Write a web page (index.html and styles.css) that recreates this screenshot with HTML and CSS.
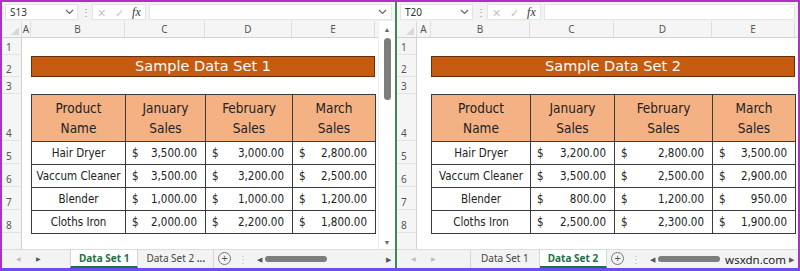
FILE: index.html
```html
<!DOCTYPE html>
<html>
<head>
	<meta charset="UTF-8">
	<title>Sample Data Sets</title>
<link rel="stylesheet" href="styles.css">
</head>
<body>
<div class="frame">
	<div class="pane pane-left">
		<div class="fbar">
			<div class="namebox">S13<svg class="chev" width="9" height="6" viewBox="0 0 9 6"><polyline points="1,1 4.5,4.5 8,1" fill="none" stroke="#666" stroke-width="1.2"/></svg></div>
			<span class="dots">&#8942;</span>
			<div class="fxbox"><span class="x">&#10005;</span><span class="ok">&#10003;</span><i>fx</i></div>
			<div class="finput"><svg class="chev" width="9" height="6" viewBox="0 0 9 6"><polyline points="1,1 4.5,4.5 8,1" fill="none" stroke="#666" stroke-width="1.2"/></svg></div>
		</div>
		<div class="sheet">
			<div class="grid">
				<div class="colhead">
					<div class="corner"></div>
					<div class="ch ca">A</div>
					<div class="ch cb">B</div>
					<div class="ch cc">C</div>
					<div class="ch cd">D</div>
					<div class="ch ce">E</div>
					<div class="ch rest"></div>
				</div>
				<div class="body">
					<div class="rowhead">
						<div class="rh r1">1</div>
						<div class="rh r2">2</div>
						<div class="rh r3">3</div>
						<div class="rh r4">4</div>
						<div class="rh r5">5</div>
						<div class="rh r5">6</div>
						<div class="rh r5">7</div>
						<div class="rh r5">8</div>
						<div class="rh rest"></div>
					</div>
					<div class="cells">
						<div class="title">Sample Data Set 1</div>
						<table class="data">
							<colgroup><col class="cb"><col class="cc"><col class="cd"><col class="ce"></colgroup>
							<tr><th>Product<br>Name</th><th>January<br>Sales</th><th>February<br>Sales</th><th>March<br>Sales</th></tr>
							<tr><td>Hair Dryer</td><td class="num"><span class="acc"><b>$</b><b>3,500.00</b></span></td><td class="num"><span class="acc"><b>$</b><b>3,000.00</b></span></td><td class="num"><span class="acc"><b>$</b><b>2,800.00</b></span></td></tr>
							<tr><td>Vaccum Cleaner</td><td class="num"><span class="acc"><b>$</b><b>3,500.00</b></span></td><td class="num"><span class="acc"><b>$</b><b>3,200.00</b></span></td><td class="num"><span class="acc"><b>$</b><b>2,500.00</b></span></td></tr>
							<tr><td>Blender</td><td class="num"><span class="acc"><b>$</b><b>1,000.00</b></span></td><td class="num"><span class="acc"><b>$</b><b>1,000.00</b></span></td><td class="num"><span class="acc"><b>$</b><b>1,200.00</b></span></td></tr>
							<tr><td>Cloths Iron</td><td class="num"><span class="acc"><b>$</b><b>2,000.00</b></span></td><td class="num"><span class="acc"><b>$</b><b>2,200.00</b></span></td><td class="num"><span class="acc"><b>$</b><b>1,800.00</b></span></td></tr>
						</table>
					</div>
				</div>
			</div>
			<div class="vscroll">
				<span class="arr">&#9650;</span>
				<div class="vthumb"></div>
				<span class="arr">&#9660;</span>
			</div>
		</div>
		<div class="tabs">
			<span class="nav dim">&#9664;</span>
			<span class="nav">&#9654;</span>
			<div class="tab first active">Data Set 1</div>
			<div class="tab">Data Set 2 <b>...</b></div>
			<span class="plus">+</span>
			<span class="vdots">&#8942;</span>
			<div class="hscroll">
				<span class="harr">&#9664;</span>
				<div class="hthumb"></div>
				<span class="fill"></span>
				<span class="harr">&#9654;</span>
			</div>
		</div>
	</div>
	<div class="divider"></div>
	<div class="pane pane-right">
		<div class="fbar">
			<div class="namebox">T20<svg class="chev" width="9" height="6" viewBox="0 0 9 6"><polyline points="1,1 4.5,4.5 8,1" fill="none" stroke="#666" stroke-width="1.2"/></svg></div>
			<span class="dots">&#8942;</span>
			<div class="fxbox"><span class="x">&#10005;</span><span class="ok">&#10003;</span><i>fx</i></div>
			<div class="finput"></div>
		</div>
		<div class="sheet">
			<div class="grid">
				<div class="colhead">
					<div class="corner"></div>
					<div class="ch ca2">A</div>
					<div class="ch cb2">B</div>
					<div class="ch cc2">C</div>
					<div class="ch cd2">D</div>
					<div class="ch ce2">E</div>
					<div class="ch rest"></div>
				</div>
				<div class="body">
					<div class="rowhead">
						<div class="rh r1">1</div>
						<div class="rh r2">2</div>
						<div class="rh r3">3</div>
						<div class="rh r4">4</div>
						<div class="rh r5">5</div>
						<div class="rh r5">6</div>
						<div class="rh r5">7</div>
						<div class="rh r5">8</div>
						<div class="rh rest"></div>
					</div>
					<div class="cells cells2">
						<div class="title">Sample Data Set 2</div>
						<table class="data">
							<colgroup><col class="cb2"><col class="cc2"><col class="cd2"><col class="ce2"></colgroup>
							<tr><th>Product<br>Name</th><th>January<br>Sales</th><th>February<br>Sales</th><th>March<br>Sales</th></tr>
							<tr><td>Hair Dryer</td><td class="num"><span class="acc"><b>$</b><b>3,200.00</b></span></td><td class="num"><span class="acc"><b>$</b><b>2,800.00</b></span></td><td class="num"><span class="acc"><b>$</b><b>3,500.00</b></span></td></tr>
							<tr><td>Vaccum Cleaner</td><td class="num"><span class="acc"><b>$</b><b>3,500.00</b></span></td><td class="num"><span class="acc"><b>$</b><b>2,500.00</b></span></td><td class="num"><span class="acc"><b>$</b><b>2,900.00</b></span></td></tr>
							<tr><td>Blender</td><td class="num"><span class="acc"><b>$</b><b>800.00</b></span></td><td class="num"><span class="acc"><b>$</b><b>1,200.00</b></span></td><td class="num"><span class="acc"><b>$</b><b>950.00</b></span></td></tr>
							<tr><td>Cloths Iron</td><td class="num"><span class="acc"><b>$</b><b>2,500.00</b></span></td><td class="num"><span class="acc"><b>$</b><b>2,300.00</b></span></td><td class="num"><span class="acc"><b>$</b><b>1,900.00</b></span></td></tr>
						</table>
					</div>
				</div>
			</div>
		</div>
		<div class="tabs">
			<span class="nav dim">&#9664;</span>
			<span class="nav dim">&#9654;</span>
			<div class="tab first">Data Set 1</div>
			<div class="tab active">Data Set 2</div>
			<span class="plus">+</span>
			<span class="vdots">&#8942;</span>
			<div class="hscroll">
				<span class="harr">&#9664;</span>
				<div class="hthumb"></div>
				<span class="mark">wsxdn.com</span>
				<span class="harr">&#9654;</span>
			</div>
		</div>
	</div>
</div>
</body>
</html>
```

FILE: styles.css
```css
*{
	box-sizing: border-box;
}
body{
	margin: 0;
	font-family: "Noto Sans", "Open Sans", sans-serif;
	background: #fff;
}
.frame{
	width: 800px;
	height: 271px;
	display: flex;
	border: 2px solid #b12fc4;
	border-bottom: 3px solid #6d4cf0;
	overflow: hidden;
}
.pane{
	display: flex;
	flex-direction: column;
	height: 100%;
	overflow: hidden;
}
.pane-left{
	width: 393px;
}
.pane-right{
	flex: 1;
}
.divider{
	width: 2px;
	background: #3f8a4e;
}

/* formula bar */
.fbar{
	height: 19px;
	background: #f3f3f3;
	display: flex;
	align-items: center;
	padding: 2px 3px 1px 3px;
	gap: 3px;
	font-size: 10px;
	color: #333;
}
.namebox{
	width: 73px;
	height: 16px;
	background: #fff;
	border: 1px solid #e4e4e4;
	display: flex;
	justify-content: space-between;
	align-items: center;
	padding: 0 3px 0 4px;
}
.dots{
	color: #999;
	width: 8px;
	text-align: center;
}
.fxbox{
	width: 54px;
	height: 16px;
	background: #fff;
	border: 1px solid #e4e4e4;
	display: flex;
	align-items: center;
	justify-content: space-around;
	color: #c4c4c4;
	font-size: 11px;
}
.fxbox i{
	font-family: "Liberation Serif", serif;
	color: #333;
	font-size: 12px;
}
.finput{
	flex: 1;
	height: 16px;
	background: #fff;
	border: 1px solid #e4e4e4;
	display: flex;
	justify-content: flex-end;
	align-items: center;
	padding-right: 4px;
}

/* sheet */
.sheet{
	flex: 1;
	display: flex;
	overflow: hidden;
}
.grid{
	flex: 1;
	display: flex;
	flex-direction: column;
	overflow: hidden;
}
.colhead{
	height: 17px;
	flex: none;
	display: flex;
	background: #f5f5f5;
	border-bottom: 1px solid #d2d2d2;
	font-size: 10px;
	color: #555;
}
.corner{
	width: 20px;
	flex: none;
	border-right: 1px solid #dcdcdc;
	position: relative;
}
.corner:after{
	content: "";
	position: absolute;
	right: 2px;
	bottom: 2px;
	border-left: 8px solid transparent;
	border-bottom: 8px solid #d8d8d8;
}
.ch{
	flex: none;
	text-align: center;
	line-height: 16px;
	border-right: 1px solid #dedede;
}
.ch.rest{
	flex: 1;
	border-right: none;
}
.ca{ width: 9px; }
.cb{ width: 94px; }
.cc{ width: 80px; }
.cd{ width: 87px; }
.ce{ width: 83px; }
.ca2{ width: 14px; }
.cb2{ width: 99px; }
.cc2{ width: 84px; }
.cd2{ width: 98px; }
.ce2{ width: 83px; }

.body{
	flex: 1;
	display: flex;
	overflow: hidden;
}
.rowhead{
	width: 20px;
	flex: none;
	background: #f5f5f5;
	border-right: 1px solid #d2d2d2;
	display: flex;
	flex-direction: column;
	font-size: 10px;
	color: #555;
}
.rh{
	flex: none;
	border-bottom: 1px solid #e2e2e2;
	display: flex;
	align-items: flex-end;
	padding: 0 0 1px 4px;
	line-height: 12px;
}
.rh.rest{
	flex: 1;
	border-bottom: none;
}
.r1{ height: 17px; }
.r2{ height: 22px; }
.r3{ height: 17px; }
.r4{ height: 47px; }
.r5{ height: 23px; }

.cells{
	flex: 1;
	padding: 18px 0 0 9px;
	background: #fff;
}
.cells2{
	padding-left: 14px;
}
.title{
	width: 344px;
	height: 21px;
	background: #c55a11;
	border: 1px solid #6b2e07;
	color: #fff;
	font-family: "DejaVu Sans", sans-serif;
	font-size: 14.5px;
	line-height: 19px;
	text-align: center;
}
.cells2 .title{
	width: 364px;
}
.data{
	margin-top: 17px;
	width: 344px;
	table-layout: fixed;
	border-collapse: collapse;
	font-family: "DejaVu Sans Condensed", "DejaVu Sans", sans-serif;
	font-stretch: condensed;
	color: #222;
}
.cells2 .data{
	width: 364px;
}
.data th{
	background: #f4b183;
	font-weight: normal;
	font-size: 13.5px;
	line-height: 20px;
	height: 47px;
	padding: 0;
	border: 1px solid #3c3c3c;
}
.data td{
	height: 23px;
	padding: 0 2px;
	font-size: 11.5px;
	text-align: center;
	border: 1px solid #3c3c3c;
	white-space: nowrap;
}
.data td.num{
	padding: 0 8px 0 6px;
}
.acc{
	display: flex;
	justify-content: space-between;
}
.acc b{
	font-weight: normal;
}

/* vertical scrollbar */
.vscroll{
	width: 17px;
	flex: none;
	display: flex;
	flex-direction: column;
	align-items: center;
	padding: 4px 0 2px 0;
	background: #fff;
	border-left: 1px solid #eee;
}
.arr{
	font-size: 7px;
	color: #666;
	line-height: 9px;
}
.vthumb{
	width: 7px;
	height: 62px;
	margin-top: 4px;
	border-radius: 4px;
	background: #7d7d7d;
	flex: none;
}
.vscroll .arr:last-child{
	margin-top: auto;
}

/* sheet tabs */
.tabs{
	height: 19px;
	flex: none;
	display: flex;
	align-items: stretch;
	background: #f3f3f3;
	border-top: 1px solid #dcdcdc;
	font-size: 10px;
	color: #444;
}
.nav{
	font-size: 6px;
	color: #555;
	width: 20px;
	text-align: center;
	line-height: 18px;
}
.nav:first-child{
	margin-left: 6px;
}
.nav.dim{
	color: #bbb;
}
.tab{
	padding: 0 8px;
	line-height: 17px;
	border-right: 1px solid #d6d6d6;
	white-space: nowrap;
}
.tab.first{
	margin-left: 22px;
	border-left: 1px solid #d6d6d6;
}
.pane-right .tab.first{
	margin-left: 27px;
	padding: 0 10px;
}
.tab.active{
	background: #fff;
	color: #1e7145;
	font-weight: bold;
	border-bottom: 2px solid #1e7145;
}
.tab b{
	font-weight: bold;
}
.plus{
	width: 13px;
	height: 13px;
	margin: 2px 0 0 4px;
	border: 1px solid #777;
	border-radius: 50%;
	font-size: 11px;
	line-height: 10px;
	text-align: center;
	color: #555;
}
.vdots{
	margin-left: 7px;
	color: #bbb;
	line-height: 18px;
}
.hscroll{
	flex: 1;
	display: flex;
	align-items: center;
	padding: 0 4px 0 9px;
	gap: 3px;
}
.harr{
	font-size: 7px;
	color: #555;
}
.hthumb{
	width: 62px;
	height: 6px;
	border-radius: 3px;
	background: #7d7d7d;
}
.fill{
	flex: 1;
}
.mark{
	flex: 1;
	text-align: right;
	font-size: 11.5px;
	color: #222;
}
```
